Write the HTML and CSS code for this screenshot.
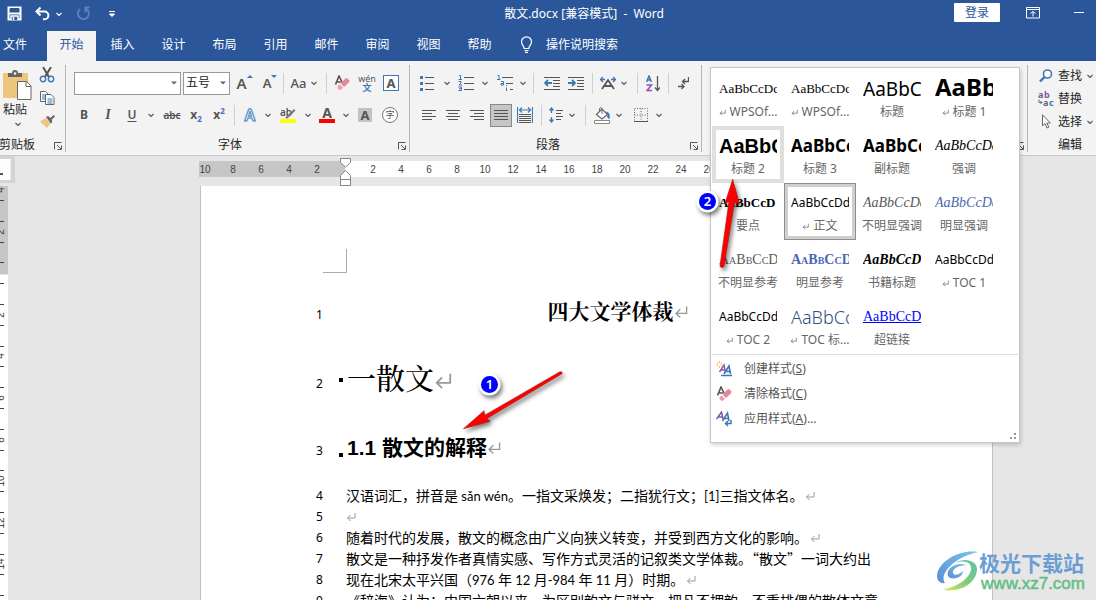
FILE: index.html
```html
<!DOCTYPE html>
<html lang="zh-CN">
<head>
<meta charset="utf-8">
<title>散文.docx [兼容模式] - Word</title>
<link rel="stylesheet" href="styles.css">
</head>
<body>
<svg class="sprites" aria-hidden="true">
  <symbol id="caret" viewBox="0 0 8 8"><path d="M1.500 3 L4 5.500 L6.500 3" fill="none" stroke="currentColor" stroke-width="1.100"/></symbol>
  <symbol id="drop" viewBox="0 0 8 8"><path d="M1 2.500h6L4 5.500z" fill="#666"/></symbol>
  <symbol id="ret" viewBox="0 0 10 10"><path d="M9 1v5H1.500M4.500 3 1.500 6 4.500 9" fill="none" stroke="currentColor" stroke-width="1"/></symbol>
  <symbol id="launch" viewBox="0 0 8 8"><path d="M.5 7.500V.5H7.500M3 3l4 4M7.500 3.500v4h-4" fill="none" stroke="#555" stroke-width="1"/></symbol>
  <symbol id="eraser" viewBox="0 0 16 16"><path d="M1.500 9.500 5 1l3 6M2.800 7h4" fill="none" stroke="#555" stroke-width="1.600"/><path d="M6.500 8.200 11.500 3.500q1-.8 2 0l1.600 1.700q.8 1 0 2L10 12z" fill="#e8859a"/><path d="M5.600 9.200 9 12.800 7.200 14.600q-1.200.8-2.200 0l-1.200-1.400q-.8-1.200 0-2.200z" fill="#ee9dac"/></symbol>
</svg>

<header class="top">
  <div class="titlebar">
    <div class="quick">
      <button class="plain" aria-label="保存"><svg width="15" height="15" viewBox="0 0 15 15"><path d="M1.500 1.500h12v12h-12z" fill="none" stroke="#fff" stroke-width="2"/><path d="M3 2h9v4.500H3z" fill="#2b579a"/><path d="M1 6.500h13v2H1z" fill="#fff"/><path d="M4 14v-4h7v4M6.500 11v3" fill="#2b579a" stroke="#fff" stroke-width="1.500"/></svg></button>
      <button class="plain undo" aria-label="撤消"><svg width="15" height="14" viewBox="0 0 15 14"><path d="M2 4.500h7.500a3.700 3.700 0 0 1 0 7.800H8" fill="none" stroke="#fff" stroke-width="2"/><path d="M5.500.5 1.500 4.500l4 4" fill="none" stroke="#fff" stroke-width="2"/></svg><svg class="mini" width="8" height="8"><use href="#caret"/></svg></button>
      <button class="plain" aria-label="恢复"><svg width="15" height="15" viewBox="0 0 15 15"><path d="M4 3.200A5.500 5.500 0 1 0 10.500 3M8.500 1.500h5M9.500 1.500v5" fill="none" stroke="#5f80b6" stroke-width="1.800"/></svg></button>
      <button class="plain more" aria-label="自定义"><svg width="8" height="8" viewBox="0 0 8 8"><path d="M1 1.500h6M1.500 4h5L4 6.500z" fill="#fff" stroke="#fff"/></svg></button>
    </div>
    <div class="title">散文.docx [兼容模式]&nbsp; -&nbsp; Word</div>
    <div class="window">
      <button class="login">登录</button>
      <button class="plain" aria-label="功能区显示选项"><svg width="14" height="12" viewBox="0 0 14 12"><path d="M.5.5h13v10.500H.5zM.5 2.500h13M7 9.500v-5M4.500 6.500 7 4.500l2.500 2" fill="none" stroke="#fff"/></svg></button>
      <button class="plain" aria-label="最小化"><svg width="10" height="12" viewBox="0 0 10 12"><path d="M0 5.500h10" stroke="#fff"/></svg></button>
    </div>
  </div>
  <nav class="tabs">
    <button class="tab file">文件</button><button class="tab active">开始</button><button class="tab">插入</button><button class="tab">设计</button><button class="tab">布局</button><button class="tab">引用</button><button class="tab">邮件</button><button class="tab">审阅</button><button class="tab">视图</button><button class="tab">帮助</button>
    <button class="tell"><svg width="13" height="17" viewBox="0 0 13 17"><path d="M4.200 12.500C4.200 10 1.500 9 1.500 5.800a5 5 0 0 1 10 0C11.500 9 8.800 10 8.800 12.500zM4.500 14.500h4M5 16.300h3" fill="none" stroke="#fff" stroke-width="1.200"/></svg>操作说明搜索</button>
  </nav>
</header>

<section class="ribbon">
  <div class="group clip">
    <div class="clipbody">
      <button class="plain paste"><svg width="30" height="30" viewBox="0 0 30 30"><rect y="3" width="25" height="25" rx="1" fill="#edc57c"/><path d="M5 7V3h4a3 3 0 0 1 6 0h4v4z" fill="#666"/><circle cx="12" cy="3.500" r="1.300" fill="#f3f3f3"/><path d="M14.500 11.500h9l4.500 4.500v13.500H14.500z" fill="#fff" stroke="#666"/><path d="M23 11.500V16.500h5" fill="none" stroke="#666"/></svg><span>粘贴</span><svg width="8" height="8"><use href="#caret"/></svg></button>
      <div class="cliptools">
        <button class="plain" aria-label="剪切"><svg width="16" height="16" viewBox="0 0 16 16"><path d="M4 0l6 10M12 0 6 10" stroke="#555" stroke-width="2"/><circle cx="4" cy="12" r="2.700" fill="none" stroke="#3f77b5" stroke-width="1.400"/><circle cx="12" cy="12" r="2.700" fill="none" stroke="#3f77b5" stroke-width="1.400"/></svg></button>
        <button class="plain" aria-label="复制"><svg width="16" height="16" viewBox="0 0 16 16"><path d="M1.500 1.500h5l3 3v7h-8z" fill="#fff" stroke="#666"/><path d="M3 5h4M3 7h4M3 9h4" stroke="#3f77b5"/><path d="M6.500 4.500h5.500l3 3v7H6.500z" fill="#fff" stroke="#666"/><path d="M8.500 9h5M8.500 11h5M8.500 13h5" stroke="#3f77b5"/></svg></button>
        <button class="plain" aria-label="格式刷"><svg width="16" height="16" viewBox="0 0 16 16"><path d="M1 8.500 6.500 5l5 5.500L8 15z" fill="#edc57c"/><path d="m7 4 2-1 2.500 2L14.500 2 16 3.500 12.800 6.500l.5 2.500-1.500 1.500z" fill="#666"/></svg></button>
      </div>
    </div>
    <div class="caption"><span>剪贴板</span><button class="plain launcher" aria-label="剪贴板设置"><svg width="8" height="8"><use href="#launch"/></svg></button></div>
  </div>

  <div class="group font">
    <div class="row font1">
      <div class="combo"><select aria-label="字体"><option></option></select><svg width="8" height="8"><use href="#drop"/></svg></div>
      <div class="combo"><select aria-label="字号"><option>五号</option></select><svg width="8" height="8"><use href="#drop"/></svg></div>
      <button class="plain glyph" aria-label="增大字号"><span class="big">A</span><svg width="6" height="14" viewBox="0 0 6 14"><path d="M0 4h6L3 1z" fill="#3f77b5"/></svg></button>
      <button class="plain glyph" aria-label="减小字号"><span>A</span><svg width="6" height="14" viewBox="0 0 6 14"><path d="M0 1h6L3 4z" fill="#3f77b5"/></svg></button>
      <i class="sep"></i>
      <button class="plain aa">Aa<svg width="8" height="8"><use href="#caret"/></svg></button>
      <i class="sep"></i>
      <button class="plain" aria-label="清除所有格式"><svg width="16" height="16"><use href="#eraser"/></svg></button>
      <button class="plain pinyin"><span>wén</span><b>文</b></button>
      <button class="plain"><span class="boxed">A</span></button>
    </div>
    <div class="row font2">
      <button class="plain strong">B</button>
      <button class="plain ital">I</button>
      <button class="plain under">U</button>
      <svg width="8" height="8"><use href="#caret"/></svg>
      <button class="plain strike">abc</button>
      <button class="plain script">x<sub>2</sub></button>
      <button class="plain script">x<sup>2</sup></button>
      <i class="sep"></i>
      <button class="plain outline">A</button>
      <svg width="8" height="8"><use href="#caret"/></svg>
      <button class="plain" aria-label="突出显示"><svg width="16" height="18" viewBox="0 0 16 18"><text x="0" y="10" class="tinytext">ab</text><path d="M5 12 14 3l1.500 1.500-8 8z" fill="#777"/><path d="M0 13h16v4H0z" fill="#ff0"/></svg></button>
      <svg width="8" height="8"><use href="#caret"/></svg>
      <button class="plain color"><span>A</span></button>
      <svg width="8" height="8"><use href="#caret"/></svg>
      <button class="plain"><span class="shade">A</span></button>
      <button class="plain"><span class="ring">字</span></button>
    </div>
    <div class="caption"><span class="mid">字体</span><button class="plain launcher" aria-label="字体设置"><svg width="8" height="8"><use href="#launch"/></svg></button></div>
  </div>

  <div class="group para">
    <div class="row para1">
      <button class="plain" aria-label="项目符号"><svg width="14" height="16" viewBox="0 0 14 16"><path d="M5 2.500h9M5 8.500h9M5 14.500h9" stroke="#555"/><path d="M0 1h3v3H0zM0 7h3v3H0zM0 13h3v3H0z" fill="#3f77b5"/></svg></button>
      <svg width="8" height="8"><use href="#caret"/></svg>
      <button class="plain" aria-label="编号"><svg width="16" height="16" viewBox="0 0 16 16"><path d="M6 2.500h10M6 8.500h10M6 14.500h10" stroke="#555"/><path d="M1 .5h1.500V4M.5 4.500h3.500M.5 6.500h2.500v1.500L1 10h3M.5 12h3v3.500h-3M1 13.700h2" fill="none" stroke="#3f77b5"/></svg></button>
      <svg width="8" height="8"><use href="#caret"/></svg>
      <button class="plain" aria-label="多级列表"><svg width="16" height="16" viewBox="0 0 16 16"><path d="M5 2.500h11M9 8.500h7M13 14.500h3" stroke="#555"/><path d="M.5.5H2V4M0 4.500h3.500M4 6.500h2.500v3.500H4V8.500h2.500M9.500 12.500v3.500M9.500 10v1" fill="none" stroke="#3f77b5"/></svg></button>
      <svg width="8" height="8"><use href="#caret"/></svg>
      <i class="sep"></i>
      <button class="plain" aria-label="减少缩进"><svg width="16" height="14" viewBox="0 0 16 14"><path d="M0 1.500h16M9 4.500h7M9 7.500h7M9 10.500h7M0 13.500h16" stroke="#555"/><path d="M8 7H1.500M4 4 1 7l3 3" fill="none" stroke="#3f77b5" stroke-width="1.800"/></svg></button>
      <button class="plain" aria-label="增加缩进"><svg width="16" height="14" viewBox="0 0 16 14"><path d="M0 1.500h16M9 4.500h7M9 7.500h7M9 10.500h7M0 13.500h16" stroke="#555"/><path d="M0 7h6.500M4 4l3 3-3 3" fill="none" stroke="#3f77b5" stroke-width="1.800"/></svg></button>
      <i class="sep"></i>
      <button class="plain" aria-label="中文版式"><svg width="16" height="14" viewBox="0 0 16 14"><path d="M2 13 8 4l6 9M4.500 10h7" fill="none" stroke="#555" stroke-width="1.800"/><path d="M0 3.500h5M3 1 .5 3.500 3 6M16 3.500h-5M13 1l2.500 2.500L13 6" fill="none" stroke="#3f77b5" stroke-width="1.300"/></svg></button>
      <svg width="8" height="8"><use href="#caret"/></svg>
      <i class="sep"></i>
      <button class="plain" aria-label="排序"><svg width="14" height="17" viewBox="0 0 14 17"><path d="M.5 7 3 1l2.500 6M1.500 5h3" fill="none" stroke="#3f77b5" stroke-width="1.500"/><path d="M.5 10h5L1 15.500h5" fill="none" stroke="#9152b0" stroke-width="1.500"/><path d="M11.500 1v14M9 12.500l2.500 3 2.500-3" fill="none" stroke="#555" stroke-width="1.300"/></svg></button>
      <i class="sep"></i>
      <button class="plain" aria-label="显示编辑标记"><svg width="11" height="13" viewBox="0 0 11 13"><path d="M10.500 0v4.500H5M7 2 4.500 4.500 7 7M0 9.500h5.500M3.500 7 6 9.500 3.500 12" fill="none" stroke="#555" stroke-width="1.300"/></svg></button>
    </div>
    <div class="row para2">
      <button class="plain" aria-label="左对齐"><svg width="14" height="12" viewBox="0 0 14 12"><path d="M0 1.500h14M0 4.500h10M0 7.500h14M0 10.500h10" stroke="#555"/></svg></button>
      <button class="plain" aria-label="居中"><svg width="14" height="12" viewBox="0 0 14 12"><path d="M0 1.500h14M2 4.500h10M0 7.500h14M2 10.500h10" stroke="#555"/></svg></button>
      <button class="plain" aria-label="右对齐"><svg width="14" height="12" viewBox="0 0 14 12"><path d="M0 1.500h14M4 4.500h10M0 7.500h14M4 10.500h10" stroke="#555"/></svg></button>
      <button class="plain on" aria-label="两端对齐"><svg width="14" height="12" viewBox="0 0 14 12"><path d="M0 1.500h14M0 4.500h14M0 7.500h14M0 10.500h14" stroke="#555"/></svg></button>
      <button class="plain" aria-label="分散对齐"><svg width="16" height="16" viewBox="0 0 16 16"><path d="M.5 0v16M15.500 0v16M3 3h10M5 .5 2.500 3 5 5.500M11 .5 13.500 3 11 5.500" fill="none" stroke="#3f77b5" stroke-width="1.200"/><path d="M2 7.500h12M2 9.500h12M2 11.500h12M2 13.500h12M2 15.500h12" stroke="#555"/></svg></button>
      <i class="sep"></i>
      <button class="plain" aria-label="行距"><svg width="14" height="16" viewBox="0 0 14 16"><path d="M7 3.500h7M7 6.500h5M7 9.500h7M7 12.500h5" stroke="#555"/><path d="M2.500 1v5M.5 3.500l2-2.500 2 2.500M2.500 10v5M.5 12.500l2 2.500 2-2.500" fill="none" stroke="#3f77b5" stroke-width="1.300"/></svg></button>
      <svg width="8" height="8"><use href="#caret"/></svg>
      <i class="sep"></i>
      <button class="plain" aria-label="底纹"><svg width="17" height="17" viewBox="0 0 17 17"><path d="M2.500 7.500 8 2l5.500 5.500L8 12z" fill="#fff" stroke="#666" stroke-width="1.200"/><path d="M8 7V1.500Q7-.5 5.500 1.500V4" fill="none" stroke="#666"/><path d="M12 4.500q5 1 3.500 7.500-3-1-2-4z" fill="#3f77b5"/><path d="M.5 13.500h15v3H.5z" fill="#fff" stroke="#888"/></svg></button>
      <svg width="8" height="8"><use href="#caret"/></svg>
      <button class="plain" aria-label="边框"><svg width="14" height="14" viewBox="0 0 14 14"><path d="M.5.5h13v13H.5zM7 .5v13M.5 7h13" fill="none" stroke="#666" stroke-dasharray="1 1.500"/><path d="M0 13.500h14" stroke="#555"/></svg></button>
      <svg width="8" height="8"><use href="#caret"/></svg>
    </div>
    <div class="caption"><span class="mid">段落</span><button class="plain launcher" aria-label="段落设置"><svg width="8" height="8"><use href="#launch"/></svg></button></div>
  </div>

  <div class="group styles">
    <div class="caption"><span class="mid"></span><button class="plain launcher" aria-label="样式设置"><svg width="8" height="8"><use href="#launch"/></svg></button></div>
    <div class="gallery">
      <div class="cells">
        <button class="cell"><span class="demo times">AaBbCcDd</span><span class="name"><svg width="7" height="7"><use href="#ret"/></svg>WPSOf...</span></button>
        <button class="cell"><span class="demo times">AaBbCcDd</span><span class="name"><svg width="7" height="7"><use href="#ret"/></svg>WPSOf...</span></button>
        <button class="cell"><span class="demo head">AaBbC</span><span class="name">标题</span></button>
        <button class="cell"><span class="demo h1">AaBb</span><span class="name"><svg width="7" height="7"><use href="#ret"/></svg>标题 1</span></button>
        <button class="cell hover"><span class="demo h2">AaBbC</span><span class="name">标题 2</span></button>
        <button class="cell"><span class="demo h3">AaBbCc</span><span class="name">标题 3</span></button>
        <button class="cell"><span class="demo h3">AaBbCc</span><span class="name">副标题</span></button>
        <button class="cell"><span class="demo em">AaBbCcDd</span><span class="name">强调</span></button>
        <button class="cell"><span class="demo times bold">AaBbCcD</span><span class="name">要点</span></button>
        <button class="cell current"><span class="demo body">AaBbCcDd</span><span class="name"><svg width="7" height="7"><use href="#ret"/></svg>正文</span></button>
        <button class="cell"><span class="demo em gray">AaBbCcDd</span><span class="name">不明显强调</span></button>
        <button class="cell"><span class="demo em blue">AaBbCcDd</span><span class="name">明显强调</span></button>
        <button class="cell"><span class="demo caps gray">AaBbCcDd</span><span class="name">不明显参考</span></button>
        <button class="cell"><span class="demo caps blue bold">AaBbCcDd</span><span class="name">明显参考</span></button>
        <button class="cell"><span class="demo em bold">AaBbCcDd</span><span class="name">书籍标题</span></button>
        <button class="cell"><span class="demo body">AaBbCcDd</span><span class="name"><svg width="7" height="7"><use href="#ret"/></svg>TOC 1</span></button>
        <button class="cell"><span class="demo body">AaBbCcDd</span><span class="name"><svg width="7" height="7"><use href="#ret"/></svg>TOC 2</span></button>
        <button class="cell"><span class="demo toc">AaBbCc</span><span class="name"><svg width="7" height="7"><use href="#ret"/></svg>TOC 标...</span></button>
        <button class="cell"><span class="demo times link">AaBbCcDd</span><span class="name">超链接</span></button>
      </div>
      <div class="menu">
        <button class="item"><svg width="16" height="16" viewBox="0 0 16 16"><path d="M3.500 0v7M0 3.500h7M1 1l5 5M6 1 1 6" stroke="#edc57c"/><circle cx="3.500" cy="3.500" r="1.500" fill="#fff"/><path d="M3.500 11 8 4l1.500 7M5.500 9h4" fill="none" stroke="#8a55ad" stroke-width="1.400"/><path d="m8 13 5-8 1.500 8M10 10.500h4.500M5 14.500h11" fill="none" stroke="#3f77b5" stroke-width="1.600"/></svg><span>创建样式(<u>S</u>)</span></button>
        <button class="item"><svg width="16" height="16"><use href="#eraser"/></svg><span>清除格式(<u>C</u>)</span></button>
        <button class="item"><svg width="16" height="16" viewBox="0 0 16 16"><path d="M.5 8 5.500 1 7 8M2.500 6h4" fill="none" stroke="#8a55ad" stroke-width="1.500"/><path d="m6.500 10 5-8 1.500 8M8 7.500h5M15 9v3.500H9.500M12 10l-2.500 2.500L12 15" fill="none" stroke="#3f77b5" stroke-width="1.500"/></svg><span>应用样式(<u>A</u>)...</span></button>
      </div>
      <svg class="grip" width="7" height="7" viewBox="0 0 7 7"><path d="M4 0h2v2H4zM0 4h2v2H0zM4 4h2v2H4z" fill="#999"/></svg>
    </div>
  </div>

  <div class="group edit">
    <button class="plain line find"><svg width="14" height="14" viewBox="0 0 14 14"><circle cx="8.500" cy="5" r="4" fill="#fff" stroke="#3f77b5" stroke-width="1.600"/><path d="M5.500 8 1 12.500" stroke="#3f77b5" stroke-width="2.400"/></svg><span>查找</span><svg width="8" height="8"><use href="#caret"/></svg></button>
    <button class="plain line"><svg width="16" height="16" viewBox="0 0 16 16"><text x="0" y="7" class="ab">a</text><text x="6" y="7" class="ab violet">b</text><text x="5" y="15" class="ab">a</text><text x="11" y="15" class="ab azure">c</text><path d="M1 8.500v3h3M2.500 10 4 11.500 2.500 13" fill="none" stroke="#3f77b5"/></svg><span>替换</span></button>
    <button class="plain line"><svg width="10" height="15" viewBox="0 0 10 15"><path d="M1.500.8v11l2.500-2.300 2 4.500 1.800-.8-2-4.200h3.500z" fill="#fff" stroke="#666"/></svg><span>选择</span><svg width="8" height="8"><use href="#caret"/></svg></button>
    <div class="editcap">编辑</div>
  </div>
</section>

<main class="work">
  <div class="rulerbar">
    <div class="tabstop"><span></span></div>
    <div class="ruler">
      <div class="margin"><span>10</span><span>8</span><span>6</span><span>4</span><span>2</span></div>
      <div class="scale"><svg class="indent" width="11" height="28" viewBox="0 0 11 28"><path d="M.5.500h10V4.500l-5 4.500-5-4.500zM.5 27.500v-10l5-5 5 5v10zM.5 21.500h10" fill="#fff" stroke="#888"/></svg><span>2</span><span>4</span><span>6</span><span>8</span><span>10</span><span>12</span><span>14</span><span>16</span><span>18</span><span>20</span><span>22</span><span>24</span><span>26</span></div>
    </div>
  </div>
  <div class="canvas">
    <svg class="vruler" width="9" height="420" viewBox="0 0 9 420"><path d="M0 0h8v88H0z" fill="#c6c6c6"/><path d="M0 89h8v340H0z" fill="#fff"/><path d="M0 14.500h4M0 35.500h4M0 56.500h4M0 76.500h4M0 97.500h4M0 118.500h4M0 139.500h4M0 160.500h4M0 180.500h4M0 201.500h4M0 222.500h4M0 243.500h4M0 264.500h4M0 284.500h4M0 305.500h4M0 326.500h4M0 347.500h4M0 368.500h4M0 388.500h4M0 409.500h4" stroke="#444"/>
      <g class="vnum"><text transform="translate(4 4) rotate(-90)">4</text><text transform="translate(4 46) rotate(-90)">2</text><text transform="translate(4 129) rotate(-90)">2</text><text transform="translate(4 170) rotate(-90)">4</text><text transform="translate(4 212) rotate(-90)">6</text><text transform="translate(4 254) rotate(-90)">8</text><text transform="translate(4 295) rotate(-90)">10</text><text transform="translate(4 337) rotate(-90)">12</text><text transform="translate(4 378) rotate(-90)">14</text></g></svg>
    <article class="page">
      <div class="corner"></div>
      <div class="para-row r1"><span class="no">1</span><h1 class="center">四大文学体裁<svg width="14" height="14"><use href="#ret"/></svg></h1></div>
      <div class="para-row r2"><span class="no">2</span><h2 class="chapter">一散文<svg width="18" height="18"><use href="#ret"/></svg></h2></div>
      <div class="para-row r3"><span class="no">3</span><h3 class="section">1.1 散文的解释<svg width="14" height="14"><use href="#ret"/></svg></h3></div>
      <div class="para-row"><span class="no">4</span><p>汉语词汇，拼音是<span class="lat"> sǎn wén</span>。一指文采焕发；二指犹行文；<span class="lat">[1]</span>三指文体名。<svg width="10" height="10"><use href="#ret"/></svg></p></div>
      <div class="para-row blank"><span class="no">5</span><p><svg width="10" height="10"><use href="#ret"/></svg></p></div>
      <div class="para-row"><span class="no">6</span><p>随着时代的发展，散文的概念由广义向狭义转变，并受到西方文化的影响。<svg width="10" height="10"><use href="#ret"/></svg></p></div>
      <div class="para-row"><span class="no">7</span><p>散文是一种抒发作者真情实感、写作方式灵活的记叙类文学体裁。“散文”一词大约出</p></div>
      <div class="para-row"><span class="no">8</span><p>现在北宋太平兴国（<span class="lat">976 </span>年<span class="lat"> 12 </span>月<span class="lat">-984 </span>年<span class="lat"> 11 </span>月）时期。<svg width="10" height="10"><use href="#ret"/></svg></p></div>
      <div class="para-row"><span class="no">9</span><p>《辞海》认为：中国六朝以来，为区别韵文与骈文，把凡不押韵、不重排偶的散体文章</p></div>
    </article>
  </div>
</main>

<svg class="marks" width="1096" height="600" viewBox="0 0 1096 600" aria-hidden="true">
  <g class="cast" stroke="#a51616" stroke-width=".6" fill="#f00">
    <path d="M463.500 428.700 484 410.700 484.700 415.300 560 371.700Q563 371.500 562 373.700L487 418.500 490 421.200z"/>
    <path d="M732.700 179.300 739.500 204 734.500 202 724 266.500Q721.500 269 720 266L729 201.500 725 203.500z"/>
  </g>
  <g class="cast"><circle cx="489.500" cy="384.500" r="11" fill="#fff"/><circle cx="707.500" cy="201.500" r="11" fill="#fff"/></g>
  <circle cx="489.500" cy="384.500" r="8.500" fill="#00f"/><circle cx="707.500" cy="201.500" r="8.500" fill="#00f"/>
  <g class="digit"><text x="489.500" y="389">1</text><text x="707.500" y="206">2</text></g>
</svg>

<div class="brand">
  <svg width="43" height="42" viewBox="0 0 43 42">
    <defs><linearGradient id="sky" x1="1" y1="0" x2="0" y2="1"><stop offset="0" stop-color="#79c4ec"/><stop offset="1" stop-color="#5b8fd6"/></linearGradient><linearGradient id="leaf" x1="1" y1="0" x2="0" y2="1"><stop offset="0" stop-color="#5bc4ae"/><stop offset=".5" stop-color="#7dc97a"/><stop offset="1" stop-color="#e2e65a"/></linearGradient></defs>
    <path d="M42 2C26-1 2 10 1 26c0 5 4 8 8 7C3 25 16 8 42 2z" fill="url(#sky)"/>
    <path d="M19 13c12-4 17 1 16 7-2 9-13 16-28 20 20 3 34-9 34-21 0-8-12-12-22-6z" fill="url(#leaf)"/>
    <path d="M31 16C23 10 9 18 12 26c3 5 15 2 15-5-4 4-9 5-10 2-1-4 7-9 14-7z" fill="url(#sky)"/>
  </svg>
  <div><div class="site">极光下载站</div><div class="url">www.xz7.com</div></div>
</div>
</body>
</html>
```
FILE: styles.css
```css
* { box-sizing: border-box; }
body {
  margin: 0;
  height: 100vh;
  overflow: hidden;
  display: flex;
  flex-direction: column;
  position: relative;
  background: #e6e6e6;
  color: #262626;
  font: 12px/16px "Noto Sans", "Noto Sans CJK SC", sans-serif;
}
button, select { font: inherit; color: inherit; }
svg { display: block; flex: none; }
.sprites { position: absolute; width: 0; height: 0; }
.plain {
  display: flex;
  align-items: center;
  justify-content: center;
  padding: 0;
  border: 0;
  background: none;
}

/* Title bar and tabs */
.top { background: #2b579a; color: #fff; }
.titlebar {
  display: grid;
  grid-template-columns: 46% 1fr auto;
  height: 31px;
  padding-bottom: 4px;
  align-items: center;
}
.quick { display: flex; align-items: center; padding-left: 7px; gap: 13px; }
.undo { gap: 5px; }
.quick .more { padding-left: 4px; }
.title { font-size: 12px; white-space: pre; }
.window { display: flex; align-items: center; align-self: start; padding: 3px 12px 0 0; }
.window .plain { margin-left: 26px; height: 18px; }
.window .plain + .plain { margin-left: 34px; }
.login {
  width: 46px;
  height: 19px;
  padding: 0;
  border: 0;
  border-radius: 1px;
  background: #fff;
  color: #2b579a;
}
.tabs { display: flex; height: 30px; gap: 2px; }
.tab {
  width: 49px;
  padding: 0 0 3px;
  border: 0;
  background: none;
}
.tab.file { width: 45px; padding-left: 3px; text-align: left; }
.tab.active { background: #f3f3f3; color: #2b579a; }
.tell {
  display: flex;
  align-items: center;
  gap: 13px;
  margin-left: 14px;
  padding: 0 0 3px;
  border: 0;
  background: none;
}

/* Ribbon */
.ribbon {
  display: flex;
  height: 95px;
  padding-top: 4px;
  background: #f3f3f3;
  border-bottom: 1px solid #c9c9c9;
}
.ribbon .plain { color: #555; }
.group {
  display: flex;
  flex-direction: column;
  height: 87px;
  border-right: 1px solid #b5b5b5;
}
.caption { display: flex; align-items: center; height: 15px; margin-top: auto; }
.caption .mid { flex: 1; text-align: center; }
.launcher { width: 15px; height: 15px; padding-top: 2px; }
.clip { width: 66px; }
.clip .caption { justify-content: space-between; }
.clip .caption span { width: 50px; text-indent: -1px; white-space: nowrap; }
.clipbody { display: flex; justify-content: space-between; }
.ribbon .paste { flex-direction: column; width: 34px; padding-left: 2px; padding-top: 3px; gap: 2px; color: #262626; }
.paste span { padding-right: 6px; }
.paste svg:last-child { color: #555; }
.cliptools { display: flex; flex-direction: column; gap: 7px; padding: 2px 10px 0 0; }
.font { width: 344px; }
.para { width: 292px; }
.styles { flex: 1; position: relative; }
.edit { width: 68px; border-right: 0; }
.row { display: grid; height: 32px; align-items: center; justify-items: center; color: #555; }
.font1 {
  height: 36px;
  grid-template-columns: 107px 47px 25px 22px 1px 37px 3px 24px 22px 22px;
  padding-left: 8px;
  column-gap: 2px;
}
.font2 { grid-template-columns: 24px 24px 24px 14px 28px 20px 26px 4px 28px 8px 32px 8px 30px 8px 30px 20px; padding: 0 0 4px 6px; }
.para1 { height: 36px; grid-template-columns: 28px 12px 26px 12px 28px 8px 12px 26px 22px 10px 22px 10px 16px 16px 14px 16px; padding-left: 3px; }
.para2 { grid-template-columns: 24px 24px 24px 24px 24px 8px 22px 10px 16px 18px 16px 28px 8px; padding: 0 0 4px 7px; }
.sep { width: 1px; height: 21px; background: #d0d0d0; }
.combo { display: grid; align-items: center; justify-items: end; width: 100%; }
.combo > * { grid-area: 1 / 1; }
.combo svg { margin-right: 3px; pointer-events: none; }
.combo select {
  width: 100%;
  height: 23px;
  padding: 0 2px;
  border: 1px solid #999;
  border-radius: 0;
  background: #fff;
  color: #222;
  appearance: none;
}
.glyph span { font-size: 13px; font-weight: 600; }
.glyph .big { font-size: 15px; }
.glyph svg { margin-bottom: 4px; }
.aa { gap: 4px; font-size: 13px; font-weight: 500; }
.pinyin { flex-direction: column; font-size: 9px; line-height: 9px; }
.pinyin b { color: #3f77b5; line-height: 9px; }
.boxed, .shade, .ring {
  display: block;
  width: 16px;
  height: 16px;
  line-height: 14px;
  text-align: center;
  font-size: 13px;
  font-weight: 700;
}
.boxed { border: 1px solid #3f77b5; background: #fff; }
.shade { width: 14px; height: 14px; background: #c3c3c3; }
.ring { border: 1px solid #777; border-radius: 50%; background: #fff; font-size: 9px; font-weight: 400; }
.strong { font-weight: 700; }
.ital { font-style: italic; font-weight: 600; font-family: "Liberation Serif", serif; font-size: 14px; }
.under { font-weight: 600; text-decoration: underline; text-underline-offset: 2px; }
.strike { font-size: 10px; font-weight: 600; text-decoration: line-through; }
.script { font-size: 12px; font-weight: 700; }
.script sub, .script sup { color: #3f77b5; font-size: 8px; line-height: 8px; }
.script sub { padding-top: 8px; }
.script sup { padding-bottom: 8px; }
.ribbon .outline { color: #fff; font-size: 16px; font-weight: 600; -webkit-text-stroke: 1px #4a84c4; text-shadow: 0 0 2px #8db4e0; }
.tinytext { font: 600 10px "Noto Sans", sans-serif; fill: #555; }
.color span { width: 16px; height: 15px; border-bottom: 4px solid #f00; font-size: 14px; line-height: 10px; font-weight: 700; }
.on { width: 22px; height: 23px; }
.ribbon .on { background: #c6c6c6; border: 1px solid #888; }
.edit .line { display: grid; grid-template-columns: 16px 24px 8px; column-gap: 4px; width: 68px; height: 23px; padding-left: 10px; justify-content: start; justify-items: center; color: #262626; }
.edit .line svg:last-child { color: #555; }
.edit .find { height: 22px; column-gap: 4px; }
.editcap { height: 15px; margin-top: auto; padding-left: 30px; }
.ab { font: 700 9px "Noto Sans", sans-serif; fill: #666; }
.violet { fill: #8a55ad; }
.azure { fill: #3f77b5; }

/* Styles gallery */
.gallery {
  position: absolute;
  z-index: 2;
  left: 8px;
  top: 2px;
  width: 310px;
  padding: 1px;
  background: #fff;
  border: 1px solid #c6c6c6;
  box-shadow: 1px 2px 4px rgba(0, 0, 0, .18);
}
.cells { display: grid; grid-template-columns: repeat(4, 72px); grid-auto-rows: 57px; }
.cell { padding: 3px 3px 0; border: 4px solid transparent; background: none; overflow: hidden; color: #666; }
.cell.hover { border-color: #dfdfdd; }
.cell.current { border-color: #cfcfcd; outline: 1px solid #8d8f8d; outline-offset: -1px; }
.demo {
  display: flex;
  align-items: flex-end;
  height: 22px;
  overflow: hidden;
  color: #000;
  line-height: 22px;
  white-space: nowrap;
}
.name { display: flex; align-items: center; justify-content: center; gap: 4px; height: 16px; margin: 4px -4px 0; white-space: nowrap; }
.times { font-family: "Liberation Serif", serif; font-size: 13px; }
.head { font-size: 19px; }
.h1 { font-size: 24px; line-height: 26px; font-weight: 700; }
.h2 { font-family: "Liberation Sans", sans-serif; font-size: 20px; font-weight: 700; }
.h3 { font-size: 17px; font-weight: 700; }
.em { font-family: "Liberation Serif", serif; font-size: 14px; font-style: italic; }
.body { font-size: 12px; }
.caps { font-family: "Liberation Serif", serif; font-size: 14px; font-variant: small-caps; }
.toc { font-size: 18px; font-weight: 300; color: #35507f; }
.gray { color: #5a5a5a; }
.blue { color: #4a69b0; }
.bold { font-weight: 700; }
.link { color: #00f; font-size: 14px; text-decoration: underline; }
.menu { padding: 1px 0 10px; border-top: 1px solid #ddd; }
.item {
  display: flex;
  align-items: center;
  gap: 12px;
  width: 100%;
  height: 25px;
  padding: 0 0 0 4px;
  border: 0;
  background: none;
  color: #555;
}
.grip { position: absolute; right: 2px; bottom: 2px; }

/* Rulers and page */
.work { flex: 1; min-height: 0; display: flex; flex-direction: column; overflow: hidden; }
.rulerbar { display: flex; flex: none; height: 30px; }
.tabstop { width: 15px; height: 27px; padding: 3px 4px 3px 0; background: #d4d4d4; }
.tabstop span { display: block; height: 21px; background: #fdfdfd; border-right: 1px solid #eee; }
.tabstop span::after { content: ""; display: block; width: 3px; height: 14px; border-bottom: 2px solid #555; }
.ruler {
  display: flex;
  width: 793px;
  height: 16px;
  margin: 5px 0 0 184px;
  color: #444;
  font: 10px/18px "Liberation Sans", sans-serif;
  text-align: center;
}
.ruler span { flex: none; width: 28px; }
.margin { display: flex; justify-content: flex-end; width: 146px; padding-right: 14px; background: #c6c6c6; }
.scale { display: flex; position: relative; flex: 1; padding-left: 14px; background: #fff; }
.indent { position: absolute; left: -5px; top: -3px; }
.canvas { display: flex; flex: 1; min-height: 0; align-items: flex-start; }
.vnum { font: 10px "Liberation Sans", sans-serif; fill: #444; text-anchor: middle; }
.page {
  width: 793px;
  min-height: 1120px;
  margin-left: 191px;
  padding: 63px 115px;
  background: #fff;
  border: solid #c0c0c0;
  border-width: 0 1px;
  color: #000;
}
.corner { width: 24px; height: 24px; margin-left: 7px; border: solid #aaa; border-width: 0 1px 1px 0; }
.para-row { display: grid; grid-template-columns: 30px 1fr; align-items: center; height: 21px; font-size: 14px; line-height: 21px; white-space: nowrap; }
.no { font-size: 12px; }
.para-row svg { display: inline-block; margin-left: 2px; color: #999; }
.para-row p, .para-row h1, .para-row h2, .para-row h3 { margin: 0; font-family: "Noto Sans CJK SC", sans-serif; }
.para-row h1 svg, .para-row h2 svg, .para-row h3 svg, .blank svg { margin-left: 0; }
.para-row .lat { font: 13px Lato, sans-serif; white-space: pre; }
.r1 { height: 42px; margin-top: 16px; }
.r1 .no { padding-top: 8px; }
.r2 .no { padding-top: 10px; }
.r3 .no { padding-top: 4px; }
.para-row .center { padding-left: 12px; font: 700 21px/42px "Noto Serif CJK SC", "Noto Sans CJK SC", serif; text-align: center; }
.r2 { height: 60px; margin-top: 17px; }
.para-row .chapter { padding-left: 1px; font: 500 29px/60px "Noto Serif CJK SC", "Noto Sans CJK SC", serif; }
.r3 { height: 42px; margin: 19px 0 16px; }
.para-row .section { padding-left: 1px; font: 700 21px/42px "Liberation Sans", "Noto Sans CJK SC", sans-serif; }
.chapter, .section { position: relative; }
.chapter::before, .section::before { content: ""; position: absolute; left: -7px; top: 50%; width: 4px; height: 4px; background: #000; }
.section::before { margin-top: 5px; }

/* Annotations and watermark */
.marks { position: absolute; z-index: 3; left: 0; top: 0; pointer-events: none; }
.cast { filter: drop-shadow(2px 3px 2px rgba(0, 0, 0, .5)); }
.digit { font: 600 13px "Noto Sans", sans-serif; fill: #fff; text-anchor: middle; }
.brand { position: absolute; right: 11px; bottom: 6px; display: flex; }
.site { color: #6b9fd4; font: 700 21px/24px "Noto Sans CJK SC", sans-serif; }
.url { padding-left: 2px; color: #62bf83; font: 17px/20px "Liberation Sans", sans-serif; -webkit-text-stroke: .5px #62bf83; }
```
